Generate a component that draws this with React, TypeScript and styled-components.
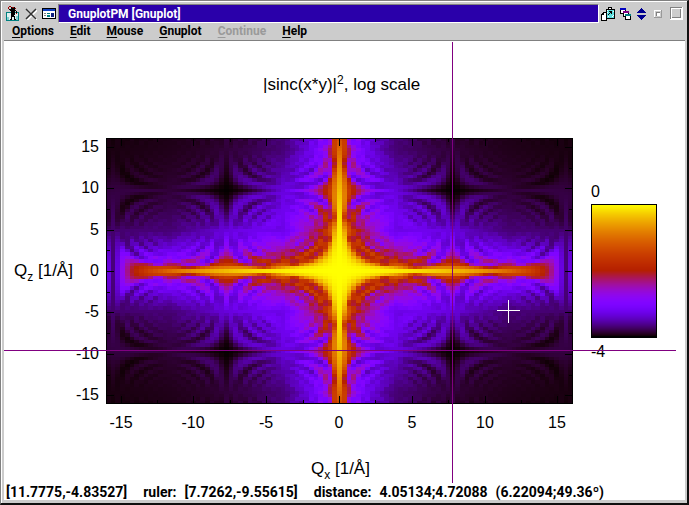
import React from "react";
import styled, { createGlobalStyle } from "styled-components";

const Global = createGlobalStyle`
  * { box-sizing: border-box; }
  body { margin: 0; background: #cccccc; }
`;

const Frame = styled.main`
  display: flex;
  flex-direction: column;
  height: 100vh;
  padding: 3px 2px 3px 3px;
  background: #cccccc;
  border: 1px solid #808080;
  border-right: 2px solid #101010;
  border-bottom: 2px solid #101010;
  box-shadow: inset 1px 1px 0 #ffffff;
  font-family: Roboto, "Liberation Sans", sans-serif;
  font-weight: 700;
  font-size: 12px;
  color: #000000;
`;

const TitleBar = styled.header`
  display: flex;
  align-items: center;
  height: 19px;
`;

const IconGroup = styled.div<{ $side: "left" | "right" }>`
  display: flex;
  align-items: center;
  gap: ${(p) => (p.$side === "left" ? 5 : 4)}px;
  padding: 0 2px;
`;

const IconButton = styled.button`
  display: flex;
  padding: 0;
  border: 0;
  background: none;
`;

const Caption = styled.h1`
  flex: 1;
  height: 19px;
  margin: 0;
  padding-left: 9px;
  background: #2a00aa;
  border: 1px solid #808080;
  border-right-color: #ffffff;
  border-bottom-color: #ffffff;
  color: #ffffff;
  font-size: 12px;
  line-height: 18px;
  white-space: nowrap;
  overflow: hidden;
`;

const MenuBar = styled.nav`
  display: flex;
  align-items: center;
  gap: 16px;
  height: 18px;
  padding-left: 8px;
  border-bottom: 1px solid #808080;
`;

const MenuButton = styled.button`
  padding: 0;
  border: 0;
  background: none;
  color: #000000;
  font: inherit;
  line-height: 17px;

  &::first-letter {
    text-decoration: underline;
    text-decoration-thickness: 1px;
    text-underline-offset: 2px;
  }
  &:disabled { color: #9a9a9a; }
`;

const PlotArea = styled.section`
  flex: 1;
  min-height: 0;
  background: #ffffff;
`;

const Plot = styled.svg`
  display: block;
  width: 100%;
  height: 100%;
  font-family: "Liberation Sans", Arial, sans-serif;
  font-weight: 400;
`;

const TickLabel = styled.text`
  font-size: 16px;
`;

const Label = styled.text`
  font-size: 17px;
`;

const Script = styled.tspan`
  font-size: 12px;
`;

const StatusBar = styled.footer`
  display: flex;
  gap: 16px;
  height: 17px;
  padding-left: 2px;
  background: #ffffff;
  font-size: 14px;
  line-height: 19px;
  white-space: nowrap;
`;

const StatusItem = styled.span`
  display: flex;
  gap: 8px;
`;

type Px = [number, number, number, number, string];

const PixelIcon = ({ w, h, px }: { w: number; h: number; px: Px[] }) => (
  <svg width={w} height={h} viewBox={`0 0 ${w} ${h}`} shapeRendering="crispEdges" aria-hidden="true">
    {px.map(([x, y, rw, rh, fill], i) => (
      <rect key={i} x={x} y={y} width={rw} height={rh} fill={fill} />
    ))}
  </svg>
);

const K = "#000000";
const W = "#ffffff";
const T = "#008080";
const R = "#a00000";

const systemIcon: Px[] = [
  [0, 6, 13, 9, T], [1, 7, 11, 7, "#e0f0f0"], [1, 11, 2, 3, "#80d0d0"], [10, 10, 2, 4, "#80d0d0"],
  [3, 0, 2, 1, R], [2, 1, 1, 2, R], [5, 1, 4, 3, K], [6, 1, 2, 1, R], [9, 2, 1, 1, R],
  [3, 3, 2, 1, K], [4, 4, 6, 1, K], [10, 5, 1, 2, K], [10, 7, 1, 1, R],
  [5, 5, 4, 4, K], [5, 9, 3, 2, K],
  [5, 11, 1, 2, K], [8, 10, 1, 3, K], [4, 13, 2, 1, K], [8, 13, 2, 1, K],
];
const listIcon: Px[] = [
  [0, 0, 14, 11, K], [1, 1, 12, 2, "#1040c0"], [1, 3, 12, 7, W],
  [2, 5, 2, 1, "#808080"], [2, 7, 2, 1, "#808080"], [5, 5, 3, 1, T], [5, 7, 3, 2, T], [9, 5, 3, 4, "#102080"],
];
const detachIcon: Px[] = [
  [5, 2, 9, 10, K], [6, 3, 7, 8, "#60e0e0"], [7, 0, 4, 2, K], [8, 1, 2, 1, W],
  [6, 3, 1, 1, W], [12, 4, 1, 1, W], [7, 9, 1, 1, W], [11, 9, 1, 1, W], [6, 5, 1, 1, W], [12, 8, 1, 1, W],
  [8, 4, 3, 1, K], [10, 4, 1, 3, K], [9, 5, 1, 1, K], [8, 6, 1, 1, K], [7, 7, 1, 1, K],
  [2, 5, 4, 9, K], [1, 6, 5, 8, K], [0, 7, 6, 7, K], [3, 6, 2, 7, W], [1, 8, 4, 5, W],
];
const cascadeIcon: Px[] = [
  [0, 0, 6, 6, K], [0, 0, 6, 2, "#0000c0"], [1, 2, 4, 3, W],
  [3, 3, 6, 6, K], [3, 3, 6, 2, "#800080"], [4, 5, 4, 3, W],
  [5, 6, 6, 6, K], [5, 6, 6, 2, T], [6, 8, 4, 3, W],
];

const CloseIcon = () => (
  <svg width="12" height="12" viewBox="0 0 12 12" aria-hidden="true">
    <path d="M2 2 12 12M12 2 2 12" stroke="#fff" strokeWidth="2" />
    <path d="M1 1 11 11M11 1 1 11" stroke="#303030" strokeWidth="1.5" />
  </svg>
);

const RollIcon = () => (
  <svg width="11" height="12" viewBox="0 0 11 12" shapeRendering="crispEdges" aria-hidden="true">
    <path d="M5.5 0 11 5H0zM0 7h11l-5.5 5z" fill="#000090" />
  </svg>
);

const MaxIcon = () => (
  <svg width="13" height="13" viewBox="0 0 13 13" shapeRendering="crispEdges" aria-hidden="true">
    <rect width="13" height="13" fill="#fff" />
    <rect width="12" height="12" fill="#808080" />
    <rect x="1" y="1" width="11" height="11" fill="#fff" />
    <rect x="2" y="2" width="9" height="9" fill="#808080" />
    <rect x="2" y="2" width="8" height="8" fill="#ccc" />
  </svg>
);

const MinIcon = () => (
  <svg width="8" height="8" viewBox="0 0 8 8" shapeRendering="crispEdges" aria-hidden="true">
    <rect width="8" height="8" fill="#999" />
    <rect width="7" height="7" fill="#fff" />
    <rect x="1" y="1" width="6" height="6" fill="#ccc" />
    <rect x="2" y="2" width="4" height="4" fill="#808080" />
    <rect x="3" y="3" width="3" height="3" fill="#fff" />
  </svg>
);

const SizeButtons = styled.div`
  display: flex;
  align-items: center;
  gap: 8px;
  padding-left: 3px;
`;

/* pm3d palette 7,5,15: sqrt(x), x^3, sin(2 pi x) */
const palette = (g: number) => {
  const c = Math.min(1, Math.max(0, g));
  const to = (v: number) => Math.round(255 * Math.min(1, Math.max(0, v)));
  return `rgb(${to(Math.sqrt(c))},${to(c ** 3)},${to(Math.sin(2 * Math.PI * c))})`;
};

const NX = 100;
const NY = 80;
const BOX = { x: 106, y: 138, w: 467, h: 266 };

const f = (x: number, y: number) => {
  const p = x * y;
  return Math.log10((Math.sin(p) / p) ** 2 + 1e-4);
};
const at = (i: number, n: number) => -16 + (32 * i) / (n - 1);

const cells: { x: number; y: number; w: number; h: number; fill: string }[] = [];
for (let j = 0; j < NY - 1; j++) {
  for (let i = 0; i < NX - 1; i++) {
    const x0 = at(i, NX), x1 = at(i + 1, NX), y0 = at(j, NY), y1 = at(j + 1, NY);
    const z = (f(x0, y0) + f(x1, y0) + f(x0, y1) + f(x1, y1)) / 4;
    const left = Math.round((i * BOX.w) / (NX - 1));
    const right = Math.round(((i + 1) * BOX.w) / (NX - 1));
    const top = Math.round((j * BOX.h) / (NY - 1));
    const bottom = Math.round(((j + 1) * BOX.h) / (NY - 1));
    cells.push({ x: BOX.x + left, y: BOX.y + top, w: right - left, h: bottom - top, fill: palette((z + 4) / 4) });
  }
}

const sx = (v: number) => Math.round(339 + v * 14.56) + 0.5;
const sy = (v: number) => Math.round(271 - v * 8.28) + 0.5;
const major = [-15, -10, -5, 0, 5, 10, 15];
const minor = [-12.5, -7.5, -2.5, 2.5, 7.5, 12.5];
const tick = (v: number, n: number) =>
  `M${sx(v)} 138v${n}M${sx(v)} 404v-${n}M106 ${sy(v)}h${n}M573 ${sy(v)}h-${n}`;
const ticks = [...major.map((v) => tick(v, 8)), ...minor.map((v) => tick(v, 4))].join("");

const GnuplotChart = () => (
  <Plot viewBox="4 41 681 442" role="img" aria-label="|sinc(x*y)|², log scale">
    <Label x="263" y="90">
      |sinc(x*y)|<Script dy="-6">2</Script>
      <tspan dy="6">, log scale</tspan>
    </Label>
    <g shapeRendering="crispEdges">
      {cells.map((c, i) => (
        <rect key={i} x={c.x} y={c.y} width={c.w} height={c.h} fill={c.fill} />
      ))}
      <path d={ticks} stroke="#000" fill="none" />
      <rect x="106.5" y="138.5" width="466" height="265" fill="none" stroke="#000" />
      {Array.from({ length: 133 }, (_, i) => (
        <rect key={i} x="591" y={204 + i} width="66" height="1" fill={palette(1 - i / 132)} />
      ))}
      <rect x="591.5" y="204.5" width="65" height="133" fill="none" stroke="#000" />
    </g>
    {major.map((v) => (
      <React.Fragment key={v}>
        <TickLabel x="99" y={Math.round(276 - v * 8.28)} textAnchor="end">{v}</TickLabel>
        <TickLabel x={Math.round(339 + v * 14.56)} y="428" textAnchor="middle">{v}</TickLabel>
      </React.Fragment>
    ))}
    <TickLabel x="591" y="197">0</TickLabel>
    <TickLabel x="591" y="357">-4</TickLabel>
    <Label x="14" y="276">
      Q<Script dy="5">z</Script>
      <tspan dy="-5"> [1/Å]</tspan>
    </Label>
    <Label x="311" y="474">
      Q<Script dy="5">x</Script>
      <tspan dy="-5"> [1/Å]</tspan>
    </Label>
    <g shapeRendering="crispEdges" fill="none">
      <path d="M452.5 42V483M4 350.5H676" stroke="#800080" />
      <path d="M508.5 300V323M497 310.5H520" stroke="#ffffff" />
    </g>
  </Plot>
);

const menus = ["Options", "Edit", "Mouse", "Gnuplot", "Continue", "Help"];

export default function App() {
  return (
    <>
      <Global />
      <Frame>
        <TitleBar>
          <IconGroup $side="left">
            <IconButton aria-label="System menu"><PixelIcon w={14} h={15} px={systemIcon} /></IconButton>
            <IconButton aria-label="Close"><CloseIcon /></IconButton>
            <IconButton aria-label="Window list"><PixelIcon w={14} h={11} px={listIcon} /></IconButton>
          </IconGroup>
          <Caption>GnuplotPM [Gnuplot]</Caption>
          <IconGroup $side="right">
            <IconButton aria-label="Detach"><PixelIcon w={15} h={14} px={detachIcon} /></IconButton>
            <IconButton aria-label="Cascade"><PixelIcon w={12} h={12} px={cascadeIcon} /></IconButton>
            <IconButton aria-label="Roll up"><RollIcon /></IconButton>
            <SizeButtons>
              <IconButton aria-label="Minimize"><MinIcon /></IconButton>
              <IconButton aria-label="Maximize"><MaxIcon /></IconButton>
            </SizeButtons>
          </IconGroup>
        </TitleBar>
        <MenuBar>
          {menus.map((m) => (
            <MenuButton key={m} disabled={m === "Continue"}>{m}</MenuButton>
          ))}
        </MenuBar>
        <PlotArea><GnuplotChart /></PlotArea>
        <StatusBar>
          <span>[11.7775,-4.83527]</span>
          <StatusItem><span>ruler:</span><span>[7.7262,-9.55615]</span></StatusItem>
          <StatusItem><span>distance:</span><span>4.05134;4.72088</span><span>(6.22094;49.36º)</span></StatusItem>
        </StatusBar>
      </Frame>
    </>
  );
}
